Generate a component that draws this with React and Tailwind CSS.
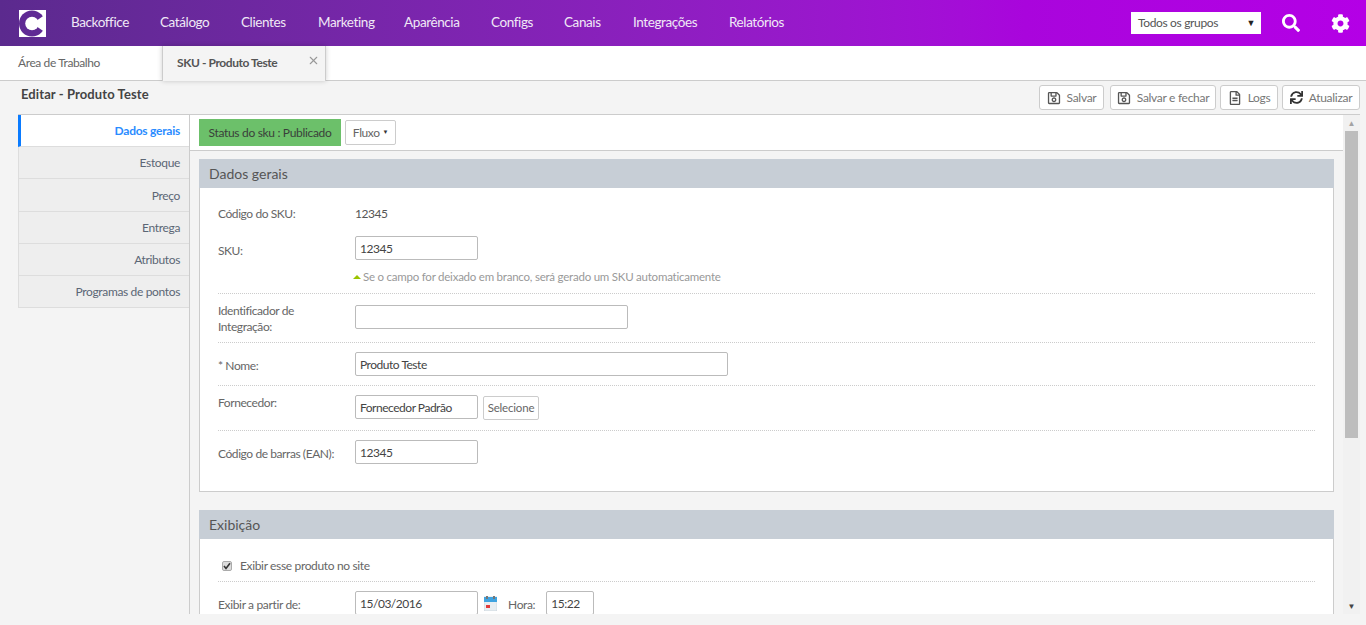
import React from "react";
import { X } from "lucide-react";
import { FaCog, FaSearch, FaRegSave, FaRegFileAlt, FaSync } from "react-icons/fa";

const F = "font-['Lato','Noto_Sans',sans-serif]";
const navItems = [
  ["Backoffice", "w-[57px]"],
  ["Catálogo", "w-[49px]"],
  ["Clientes", "w-[45px]"],
  ["Marketing", "w-[54px]"],
  ["Aparência", "w-[55px]"],
  ["Configs", "w-[41px]"],
  ["Canais", "w-[37px]"],
  ["Integrações", "w-[64px]"],
  ["Relatórios", "w-[56px]"],
];
const side = [
  ["Estoque", "h-[32px] leading-[31px]"],
  ["Preço", "h-[33px] leading-[33px]"],
  ["Entrega", "h-[32px] leading-[31px]"],
  ["Atributos", "h-[32px] leading-[31px]"],
  ["Programas de pontos", "h-[32px] leading-[31px]"],
];

function Logo() {
  return (
    <svg width="27" height="27" viewBox="0 0 27 27" className="shrink-0">
      <rect width="27" height="27" fill="#fff" />
      <circle cx="13" cy="13.5" r="13" fill="#5f2a94" />
      <circle cx="13" cy="13.5" r="6.8" fill="#fff" />
      <path d="M13.5 13.5 L27 4 V23 Z" fill="#fff" />
    </svg>
  );
}

function TopBtn({ icon, label, w, className = "" }) {
  return (
    <button className={`${w} ${className} h-[25px] bg-white border border-[#ccc] rounded-[3px] flex items-center justify-center gap-[6px] text-[12px] tracking-[-0.3px] text-[#777]`}>
      {icon}
      <span>{label}</span>
    </button>
  );
}

function Row({ label, children, className = "", dotted = true, labelClass = "" }) {
  return (
    <div className={`flex ${dotted ? "border-b border-dotted border-[#ccc]" : ""} ${className}`}>
      <div className={`w-[137px] shrink-0 text-[12px] leading-[15px] tracking-[-0.42px] text-[#666] ${labelClass}`}>{label}</div>
      <div className="flex-1">{children}</div>
    </div>
  );
}

function Input({ w, value = "" }) {
  return (
    <div className={`${w} h-[24px] border border-[#bbb] rounded-[2px] bg-white px-[4px] text-[12px] leading-[23px] tracking-[-0.48px] text-[#444]`}>{value}</div>
  );
}

export default function App() {
  return (
    <div className={`${F} h-[625px] w-[1366px] overflow-hidden bg-[#f4f4f4]`}>
      <nav className="h-[46px] flex items-center bg-gradient-to-r from-[#5b2a8e] via-[#a905dc] via-75% to-[#b400e6] pl-[19px] pr-[16px]">
        <Logo />
        <div className="ml-[25px] pb-[2px] flex gap-[32px] text-[13.5px] tracking-[-0.4px] text-[#f0e8f6]">
          {navItems.map(([n, w]) => (
            <span key={n} className={`${w} whitespace-nowrap`}>{n}</span>
          ))}
        </div>
        <div className="ml-auto w-[130px] h-[22px] bg-white flex items-center justify-between pl-[7px] pr-[6px] text-[12px] tracking-[-0.35px] text-[#555]">
          <span>Todos os grupos</span>
          <span className="text-[9px] text-[#222]">▼</span>
        </div>
        <FaSearch size={18} color="#fff" className="ml-[21px]" />
        <FaCog size={19} color="#fff" className="ml-[31px]" />
      </nav>

      <div className="h-[35px] bg-white border-b border-[#ccc] flex text-[12px]">
        <div className="w-[162px] pl-[18px] pt-[8px] tracking-[-0.4px] text-[#666]">Área de Trabalho</div>
        <div className="relative w-[164px] h-[35px] bg-[#f4f4f4] border-x border-[#ccc] shadow-[0_0_5px_rgba(0,0,0,0.2)] pl-[14px] pt-[8px] font-bold tracking-[-0.42px] text-[#555]">
          SKU - Produto Teste
          <X size={13} color="#999" className="absolute right-[5px] top-[8px]" />
        </div>
      </div>

      <div className="h-[33px] flex items-start justify-between pl-[21px] pr-[6px]">
        <h1 className="text-[13px] font-bold tracking-[0.1px] text-[#444] mt-[4px]">Editar - Produto Teste</h1>
        <div className="flex mt-[4px]">
          <TopBtn w="w-[65px]" label="Salvar" icon={<FaRegSave size={14} color="#555" />} />
          <TopBtn w="w-[106px]" className="ml-[6px]" label="Salvar e fechar" icon={<FaRegSave size={14} color="#555" />} />
          <TopBtn w="w-[58px]" className="ml-[4px]" label="Logs" icon={<FaRegFileAlt size={14} color="#555" />} />
          <TopBtn w="w-[78px]" className="ml-[4px]" label="Atualizar" icon={<FaSync size={13} color="#333" />} />
        </div>
      </div>

      <div className="h-[500px] ml-[18px] mr-[6px] flex border-t border-[#ccc] overflow-hidden">
        <aside className="w-[171px] shrink-0 text-[12px] tracking-[-0.35px] text-right">
          <div className="h-[32px] bg-white border-l-[3px] border-l-[#0a7bff] border-b border-b-[#ddd] pr-[9px] leading-[31px] font-bold tracking-[-0.25px] text-[#2a8cff]">Dados gerais</div>
          {side.map(([s, c]) => (
            <div key={s} className={`${c} bg-[#eee] border-b border-[#ddd] border-l border-l-[#ddd] pr-[9px] text-[#5b6675]`}>{s}</div>
          ))}
        </aside>
        <main className="flex-1 flex border-l border-[#ccc] min-w-0">
          <div className="flex-1 min-w-0">
            <div className="h-[36px] bg-white border-b border-[#ccc] flex items-start pl-[9px] pt-[4px] gap-[4px]">
              <div className="w-[142px] h-[27px] bg-[#6cc06a] text-[12px] tracking-[-0.32px] text-[#3a3f3a] leading-[27px] text-center">Status do sku : Publicado</div>
              <button className="w-[51px] h-[25px] bg-white border border-[#ccc] rounded-[2px] mt-[1px] pt-[1px] text-[12px] tracking-[-0.4px] text-[#666] flex items-center justify-center gap-[3px]">
                Fluxo <span className="text-[6px] text-[#333] -mt-[3px]">▼</span>
              </button>
            </div>

            <section className="mt-[8px] ml-[9px] mr-[9px] bg-white border-r border-b border-l border-[#ccc] h-[333px]">
              <h2 className="h-[29px] -mx-[1px] bg-[#c7ced6] pl-[10px] text-[14px] leading-[29px] text-[#555]">Dados gerais</h2>
              <div className="pl-[18px] pr-[18px]">
                <Row label="Código do SKU:" dotted={false} className="pt-[18px] h-[48px]">
                  <span className="text-[12px] leading-[15px] tracking-[-0.45px] block text-[#555]">12345</span>
                </Row>
                <Row label="SKU:" className="h-[58px]" labelClass="pt-[7px]">
                  <Input w="w-[123px]" value="12345" />
                  <div className="mt-[8px] flex items-center gap-[2px] -ml-[2px] text-[11.5px] tracking-[-0.23px] text-[#999]">
                    <span className="w-0 h-0 border-x-[4px] border-x-transparent border-b-[4px] border-b-[#9bc400]" />
                    Se o campo for deixado em branco, será gerado um SKU automaticamente
                  </div>
                </Row>
                <Row label={<>Identificador de<br />Integração:</>} className="h-[49px] pt-[9px]" labelClass="leading-[16px]">
                  <div className="pt-[2px]"><Input w="w-[273px]" /></div>
                </Row>
                <Row label="* Nome:" className="h-[43px] pt-[9px]" labelClass="pt-[6px]">
                  <Input w="w-[373px]" value="Produto Teste" />
                </Row>
                <Row label="Fornecedor:" className="h-[45px] pt-[9px]">
                  <div className="flex items-start gap-[5px]">
                    <Input w="w-[123px]" value="Fornecedor Padrão" />
                    <button className="w-[56px] h-[24px] mt-[1px] border border-[#ccc] rounded-[2px] bg-white text-[11.5px] tracking-[-0.2px] text-[#666]">Selecione</button>
                  </div>
                </Row>
                <Row label="Código de barras (EAN):" dotted={false} className="h-[60px] pt-[9px]" labelClass="pt-[6px]">
                  <Input w="w-[123px]" value="12345" />
                </Row>
              </div>
            </section>

            <section className="mt-[18px] ml-[9px] mr-[9px] bg-white border-r border-l border-[#ccc]">
              <h2 className="h-[29px] -mx-[1px] bg-[#c7ced6] pl-[10px] text-[14px] leading-[29px] text-[#555]">Exibição</h2>
              <div className="px-[18px]">
                <div className="h-[43px] pt-[11px] border-b border-dotted border-[#ccc] flex items-center pl-[4px] gap-[8px] text-[12px] tracking-[-0.35px] text-[#666]">
                  <span className="w-[10px] h-[10px] rounded-[2px] bg-[#dcdcdc] border border-[#aaa] flex items-center justify-center">
                    <svg width="8" height="8" viewBox="0 0 8 8"><path d="M1 4 L3 6.5 L7 1.2" fill="none" stroke="#333" strokeWidth="1.6" /></svg>
                  </span>
                  <span>Exibir esse produto no site</span>
                </div>
                <div className="flex pt-[9px] h-[60px] text-[12px] tracking-[-0.35px] text-[#666]">
                  <div className="w-[137px] pt-[5px]">Exibir a partir de:</div>
                  <Input w="w-[123px]" value="15/03/2016" />
                  <svg width="13" height="15" viewBox="0 0 13 15" className="ml-[6px] mt-[5px]">
                    <rect x="0" y="1" width="13" height="14" fill="#e8eef2" stroke="#b9c4cc" strokeWidth="0.5" />
                    <rect x="0" y="1" width="13" height="5" fill="#3fa3e0" />
                    <rect x="2" y="0" width="2" height="3" fill="#777" />
                    <rect x="9" y="0" width="2" height="3" fill="#777" />
                    <rect x="2" y="9" width="4" height="3" fill="#e23b3b" />
                  </svg>
                  <span className="ml-[11px] pt-[5px]">Hora:</span>
                  <div className="ml-[11px]"><Input w="w-[48px]" value="15:22" /></div>
                </div>
              </div>
            </section>
          </div>

          <div className="w-[17px] shrink-0 bg-[#f1f1f1] flex flex-col items-center">
            <span className="h-[16px] flex items-center text-[8px] text-[#a3a3a3] leading-none">▲</span>
            <div className="w-[13px] h-[307px] bg-[#bdbdbd]" />
            <span className="mt-auto h-[16px] flex items-center text-[8px] text-[#444] leading-none">▼</span>
          </div>
        </main>
      </div>
    </div>
  );
}
